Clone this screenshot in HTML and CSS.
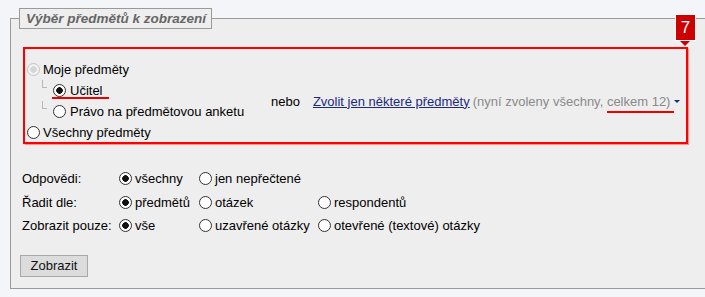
FILE: index.html
```html
<!DOCTYPE html>
<html lang="cs">

<head>
    <meta charset="UTF-8">
    <meta name="viewport" content="width=device-width, initial-scale=1.0">
    <title>Výběr předmětů</title>
    <link rel="stylesheet" href="styles.css">
</head>

<body>

    <div class="page">
        <fieldset class="filter">
            <legend>Výběr předmětů k zobrazení</legend>

            <div class="subjects">
                <span class="badge">7</span>

                <label class="opt"><input type="radio" name="scope" disabled>Moje předměty</label>

                <div class="nested">
                    <div class="tree">
                        <div class="sub">
                            <i class="branch"></i>
                            <label class="opt marked"><input type="radio" name="role" checked>Učitel</label>
                        </div>
                        <div class="sub">
                            <i class="branch"></i>
                            <label class="opt"><input type="radio" name="role">Právo na předmětovou anketu</label>
                        </div>
                    </div>

                    <div class="choice">
                        <span class="or">nebo</span>
                        <a href="#">Zvolit jen některé předměty</a>
                        <span class="note">(nyní zvoleny všechny, <span class="mark">celkem 12)</span></span>
                        <span class="caret"></span>
                    </div>
                </div>

                <label class="opt"><input type="radio" name="scope">Všechny předměty</label>
            </div>

            <div class="options">
                <div class="label">Odpovědi:</div>
                <label class="opt"><input type="radio" name="answers" checked>všechny</label>
                <label class="opt"><input type="radio" name="answers">jen nepřečtené</label>
                <div></div>

                <div class="label">Řadit dle:</div>
                <label class="opt"><input type="radio" name="sort" checked>předmětů</label>
                <label class="opt"><input type="radio" name="sort">otázek</label>
                <label class="opt"><input type="radio" name="sort">respondentů</label>

                <div class="label">Zobrazit pouze:</div>
                <label class="opt"><input type="radio" name="only" checked>vše</label>
                <label class="opt"><input type="radio" name="only">uzavřené otázky</label>
                <label class="opt"><input type="radio" name="only">otevřené (textové) otázky</label>
            </div>

            <button type="button">Zobrazit</button>
        </fieldset>
    </div>

</body>

</html>
```

FILE: styles.css
```css
body {
    font-family: "Liberation Sans", Arial, sans-serif;
    font-size: 13px;
    color: #000;
    background-color: #f4f5f9;
    margin: 0;
    overflow: hidden;
}

.page {
    padding: 8px 0 0 10px;
}

.filter {
    margin: 0;
    width: 720px;
    border: 1px solid #9a9a9a;
    background-color: #eeeeee;
    padding: 18px 0 11px 9px;
}

.filter legend {
    margin-left: -1px;
    padding: 0 5px 0 6px;
    border: 1px solid #9a9a9a;
    background-color: #eeeeee;
    color: #666;
    font-size: 13.5px;
    font-weight: bold;
    font-style: italic;
    line-height: 19px;
}

/* radios */

input[type="radio"] {
    appearance: none;
    width: 13px;
    height: 13px;
    margin: 0 3px 0 0;
    border: 1px solid #333;
    border-radius: 50%;
    background-color: #fff;
    flex: none;
}

input[type="radio"]:checked {
    background: radial-gradient(circle, #111 0 3px, #fff 3.6px);
}

input[type="radio"]:disabled {
    border-color: #c4c4c4;
    background: radial-gradient(circle, #d6d6d6 0 3px, #f2f2f2 3.6px);
}

.opt {
    display: flex;
    align-items: center;
    height: 21px;
    white-space: nowrap;
}

/* subjects box */

.subjects {
    position: relative;
    width: 665px;
    height: 97px;
    box-sizing: border-box;
    margin-left: 3px;
    padding: 10px 0 0 2px;
    border: 2px solid #ff0000;
    box-shadow: 0 0 1px 0.5px #ff9090;
}

.badge {
    position: absolute;
    top: -35px;
    right: -10px;
    width: 21px;
    height: 27px;
    box-sizing: border-box;
    border: 1px solid #fff;
    background-color: #cc0000;
    color: #fff;
    font-size: 17px;
    line-height: 25px;
    text-align: center;
}

.badge::after {
    content: "";
    position: absolute;
    left: 4px;
    bottom: -6px;
    border-left: 5px solid transparent;
    border-right: 5px solid transparent;
    border-top: 5px solid #cc0000;
}

.nested {
    display: flex;
    align-items: center;
}

.tree {
    width: 244px;
    padding-left: 15px;
    box-sizing: border-box;
}

.sub {
    display: flex;
    align-items: flex-start;
}

.branch {
    width: 4px;
    height: 7px;
    margin: 0 6px 0 0;
    border-left: 1px solid #b8b8b8;
    border-bottom: 1px solid #b8b8b8;
}

.sub .opt input {
    margin-right: 4px;
}

.marked {
    position: relative;
}

.marked::after {
    content: "";
    position: absolute;
    left: -1px;
    right: -6px;
    bottom: 2px;
    border-bottom: 2px solid #ee0000;
}

.choice {
    display: flex;
    align-items: center;
    white-space: nowrap;
}

.or {
    margin-right: 13px;
}

.choice a {
    color: #1b2a80;
    margin-right: 3px;
}

.note {
    color: #8a8a8a;
}

.mark {
    position: relative;
}

.mark::after {
    content: "";
    position: absolute;
    left: 0;
    right: -4px;
    bottom: -4px;
    border-bottom: 2px solid #ee0000;
}

.caret {
    margin-left: 4px;
    border-left: 3px solid transparent;
    border-right: 3px solid transparent;
    border-top: 3px solid #1b2a80;
}

/* other options */

.options {
    display: grid;
    grid-template-columns: 97px 80px 119px auto;
    grid-auto-rows: 23.5px;
    margin: 23px 0 0 2px;
}

.options .label,
.options .opt {
    display: flex;
    align-items: center;
    height: auto;
}

button {
    margin-top: 17px;
    width: 68px;
    height: 22px;
    padding: 0;
    border: 1px solid #a8a8a8;
    background-color: #dcdcdc;
    color: #111;
    font-family: "Liberation Sans", Arial, sans-serif;
    font-size: 13px;
}
```
